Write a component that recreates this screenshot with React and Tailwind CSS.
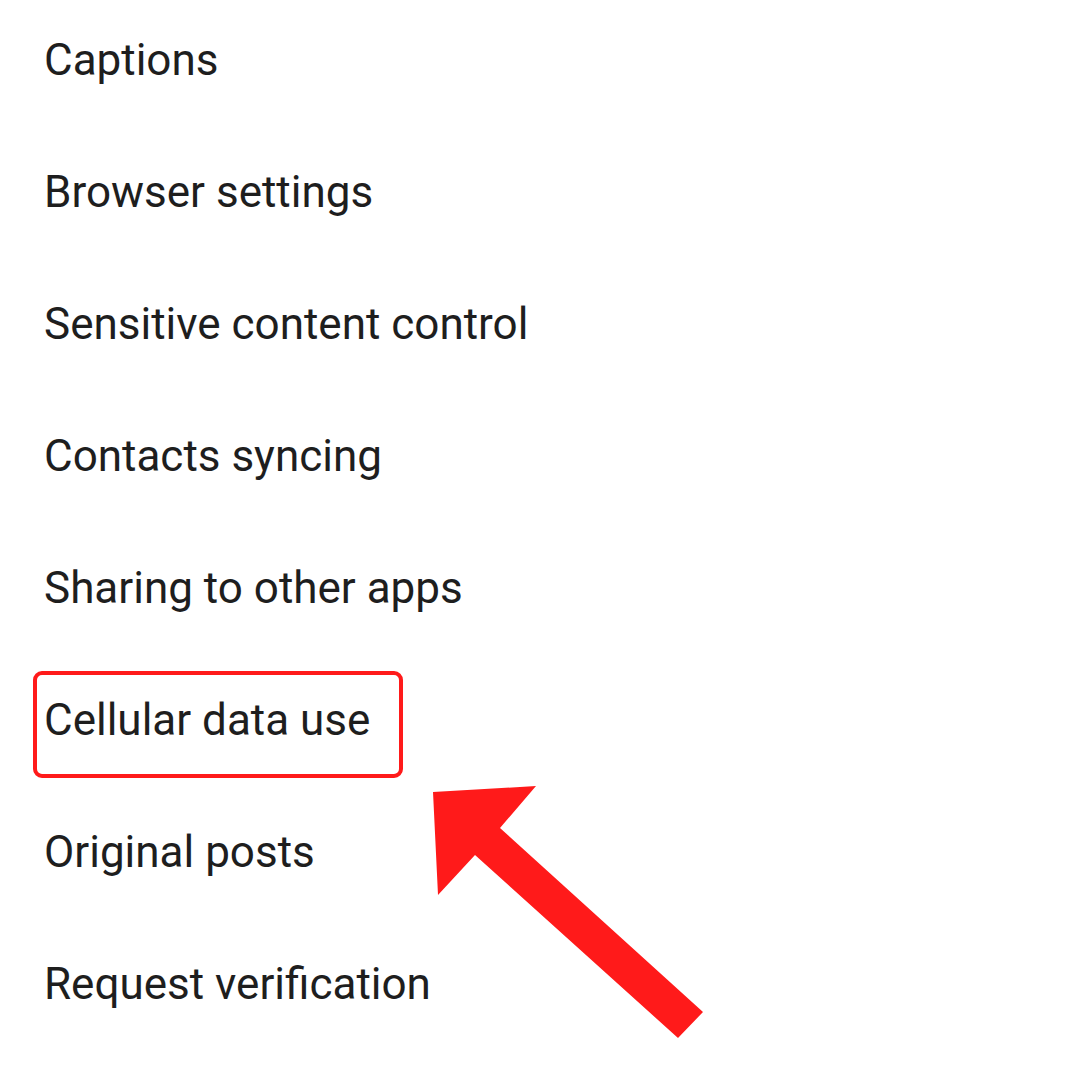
import React from 'react';

const items = [
  'Captions',
  'Browser settings',
  'Sensitive content control',
  'Contacts syncing',
  'Sharing to other apps',
  'Cellular data use',
  'Original posts',
  'Request verification',
];

const App = () => {
  return (
    <div className="relative w-[1080px] h-[1080px] bg-white overflow-hidden" style={{ fontFamily: 'Roboto, "Noto Sans", sans-serif' }}>
      {/* Lista de ajustes */}
      <div className="flex flex-col">
        {items.map((label) => (
          <div key={label} className="h-[132px] pt-[38px] pl-[44px] text-[44px] leading-[44px] text-[#1e1e1e]">
            {label}
          </div>
        ))}
      </div>

      {/* Recuadro rojo */}
      <div className="absolute left-[33px] top-[671px] w-[370px] h-[107px] border-[4px] border-[#ff1a1a] rounded-[9px]" />

      {/* Flecha */}
      <svg className="absolute left-0 top-0" width="1080" height="1080" viewBox="0 0 1080 1080">
        <polygon
          points="433,792 536,786 500,828 703,1012 678,1038 475,855 438,895"
          fill="#ff1a1a"
        />
      </svg>
    </div>
  );
};

export default App;
